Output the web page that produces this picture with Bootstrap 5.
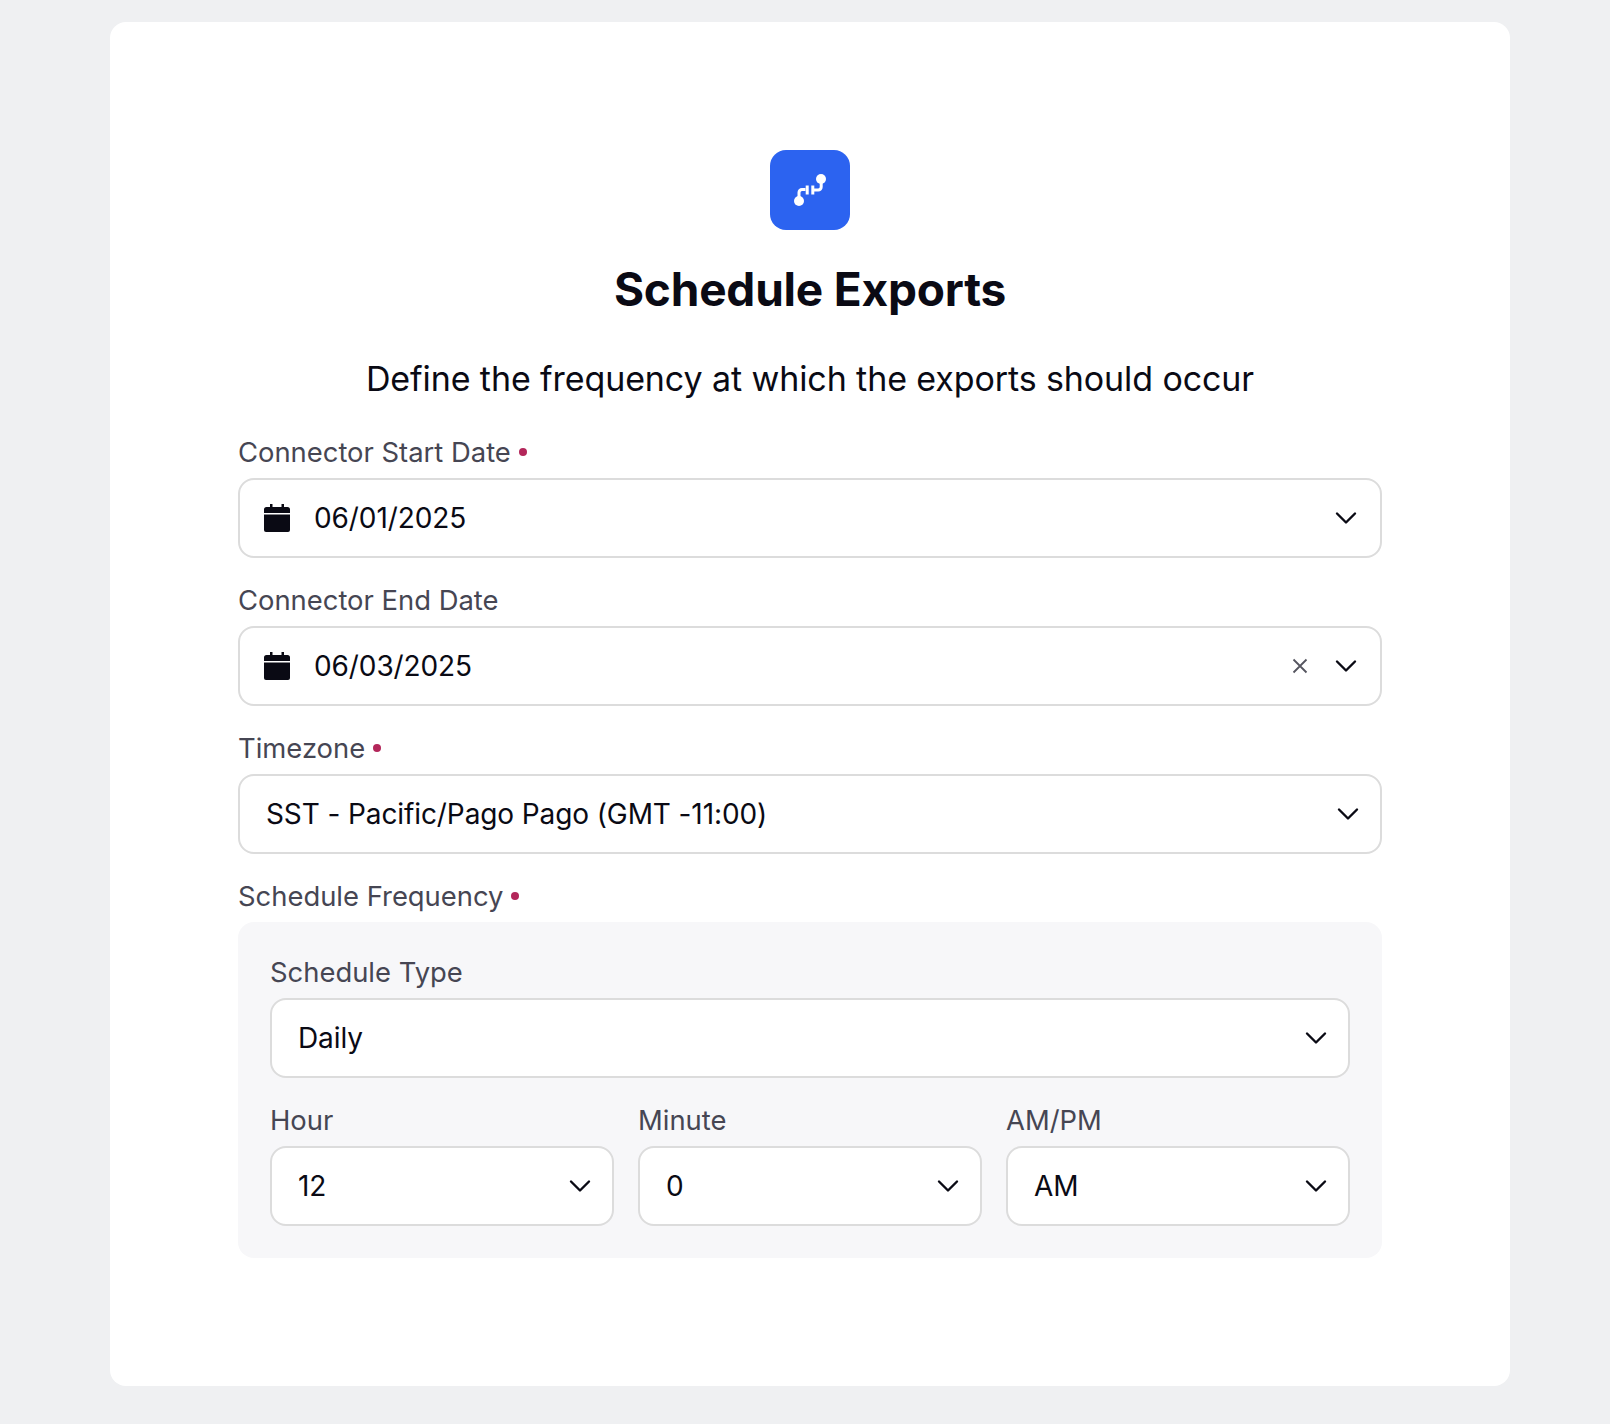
<!DOCTYPE html>
<html lang="en">
<head>
<meta charset="utf-8">
<title>Schedule Exports</title>
<link href="https://cdn.jsdelivr.net/npm/bootstrap@5.3.0/dist/css/bootstrap.min.css" rel="stylesheet">
<style>
html,body{height:100%}
body{background:#eff0f2;font-family:Inter,"Liberation Sans",sans-serif;color:#0a0a14;margin:0;padding:22px 0 0 110px}
.shell{width:1400px;height:1364px;background:#fff;border-radius:16px;padding:128px 128px 0}
.logo-box{width:80px;height:80px;border-radius:16px;background:#2c63f0;display:flex;align-items:center;justify-content:center}
.ttl{font-size:46px;font-weight:700;line-height:56px;margin:31px 0 0;letter-spacing:-.2px;color:#0a0a14}
.sub{font-size:34px;line-height:44px;margin:40px 0 0;color:#0a0a14;font-weight:400;letter-spacing:-.1px}
.fld{margin-top:22px}
.fld-first{margin-top:31px}
.lbl{font-size:27.4px;line-height:40px;height:40px;color:#464653;margin-bottom:6px;display:flex;align-items:center;gap:8px}
.dot{width:8px;height:8px;border-radius:50%;background:#b3265a;display:inline-block}
.box{height:80px;border:2px solid #dcdcdc;border-radius:16px;background:#fff;display:flex;align-items:center;padding:0 20px 0 26px;font-size:28px;letter-spacing:-.1px;color:#0a0a14}
.box-date{padding-right:22px}
.box .val{flex:1;white-space:nowrap}
.cal{margin-right:23px;margin-left:-3px;flex:none}
.x{margin-right:26px;flex:none}
.panel{background:#f7f7f9;border-radius:16px;padding:30px 32px 32px}
.panel .fld{margin-top:0}
.cols{display:grid;grid-template-columns:repeat(3,1fr);gap:24px;margin-top:22px}
</style>
</head>
<body>
<div class="shell">
  <div class="d-flex flex-column align-items-center text-center">
    <div class="logo-box">
      <svg width="36" height="36" viewBox="0 0 36 36" fill="none" stroke="#fff" stroke-width="3">
        <circle cx="7" cy="29" r="5" fill="#fff" stroke="none"/>
        <circle cx="29" cy="7" r="5" fill="#fff" stroke="none"/>
        <path d="M7 27v-6.500a3 3 0 0 1 3-3h3.500"/>
        <path d="M15.200 13.500v9"/>
        <path d="M20.800 13.500v9"/>
        <path d="M20.800 18h5.400a3 3 0 0 0 3-3V8"/>
      </svg>
    </div>
    <h1 class="ttl">Schedule Exports</h1>
    <p class="sub mb-0">Define the frequency at which the exports should occur</p>
  </div>

  <div class="fld fld-first">
    <div class="lbl">Connector Start Date<span class="dot"></span></div>
    <div class="box box-date">
      <svg class="cal" width="28" height="28" viewBox="0 0 28 28" fill="#0a0a14"><path d="M7 0h2.500v3h9V0H21v3h3.500A2.500 2.500 0 0 1 27 5.500V9H1V5.500A2.500 2.500 0 0 1 3.500 3H7z"/><path d="M1 10.500h26V26a2 2 0 0 1-2 2H3a2 2 0 0 1-2-2z"/></svg>
      <span class="val">06/01/2025</span>
      <svg width="24" height="24" viewBox="0 0 24 24" fill="none" stroke="#0a0a14" stroke-width="2.400" stroke-linecap="round" stroke-linejoin="round"><path d="M3 7.500l9 9 9-9"/></svg>
    </div>
  </div>

  <div class="fld">
    <div class="lbl">Connector End Date</div>
    <div class="box box-date">
      <svg class="cal" width="28" height="28" viewBox="0 0 28 28" fill="#0a0a14"><path d="M7 0h2.500v3h9V0H21v3h3.500A2.500 2.500 0 0 1 27 5.500V9H1V5.500A2.500 2.500 0 0 1 3.500 3H7z"/><path d="M1 10.500h26V26a2 2 0 0 1-2 2H3a2 2 0 0 1-2-2z"/></svg>
      <span class="val">06/03/2025</span>
      <svg class="x" width="16" height="16" viewBox="0 0 16 16" fill="none" stroke="#55555f" stroke-width="1.800"><path d="M1.500 1.500l13 13M14.500 1.500l-13 13"/></svg>
      <svg width="24" height="24" viewBox="0 0 24 24" fill="none" stroke="#0a0a14" stroke-width="2.400" stroke-linecap="round" stroke-linejoin="round"><path d="M3 7.500l9 9 9-9"/></svg>
    </div>
  </div>

  <div class="fld">
    <div class="lbl">Timezone<span class="dot"></span></div>
    <div class="box">
      <span class="val">SST - Pacific/Pago Pago (GMT -11:00)</span>
      <svg width="24" height="24" viewBox="0 0 24 24" fill="none" stroke="#0a0a14" stroke-width="2.400" stroke-linecap="round" stroke-linejoin="round"><path d="M3 7.500l9 9 9-9"/></svg>
    </div>
  </div>

  <div class="fld">
    <div class="lbl">Schedule Frequency<span class="dot"></span></div>
    <div class="panel">
      <div class="fld">
        <div class="lbl">Schedule Type</div>
        <div class="box">
          <span class="val">Daily</span>
          <svg width="24" height="24" viewBox="0 0 24 24" fill="none" stroke="#0a0a14" stroke-width="2.400" stroke-linecap="round" stroke-linejoin="round"><path d="M3 7.500l9 9 9-9"/></svg>
        </div>
      </div>
      <div class="cols">
        <div class="fld">
          <div class="lbl">Hour</div>
          <div class="box"><span class="val">12</span><svg width="24" height="24" viewBox="0 0 24 24" fill="none" stroke="#0a0a14" stroke-width="2.400" stroke-linecap="round" stroke-linejoin="round"><path d="M3 7.500l9 9 9-9"/></svg></div>
        </div>
        <div class="fld">
          <div class="lbl">Minute</div>
          <div class="box"><span class="val">0</span><svg width="24" height="24" viewBox="0 0 24 24" fill="none" stroke="#0a0a14" stroke-width="2.400" stroke-linecap="round" stroke-linejoin="round"><path d="M3 7.500l9 9 9-9"/></svg></div>
        </div>
        <div class="fld">
          <div class="lbl">AM/PM</div>
          <div class="box"><span class="val">AM</span><svg width="24" height="24" viewBox="0 0 24 24" fill="none" stroke="#0a0a14" stroke-width="2.400" stroke-linecap="round" stroke-linejoin="round"><path d="M3 7.500l9 9 9-9"/></svg></div>
        </div>
      </div>
    </div>
  </div>
</div>
<script src="https://cdn.jsdelivr.net/npm/bootstrap@5.3.0/dist/js/bootstrap.bundle.min.js"></script>
</body>
</html>
